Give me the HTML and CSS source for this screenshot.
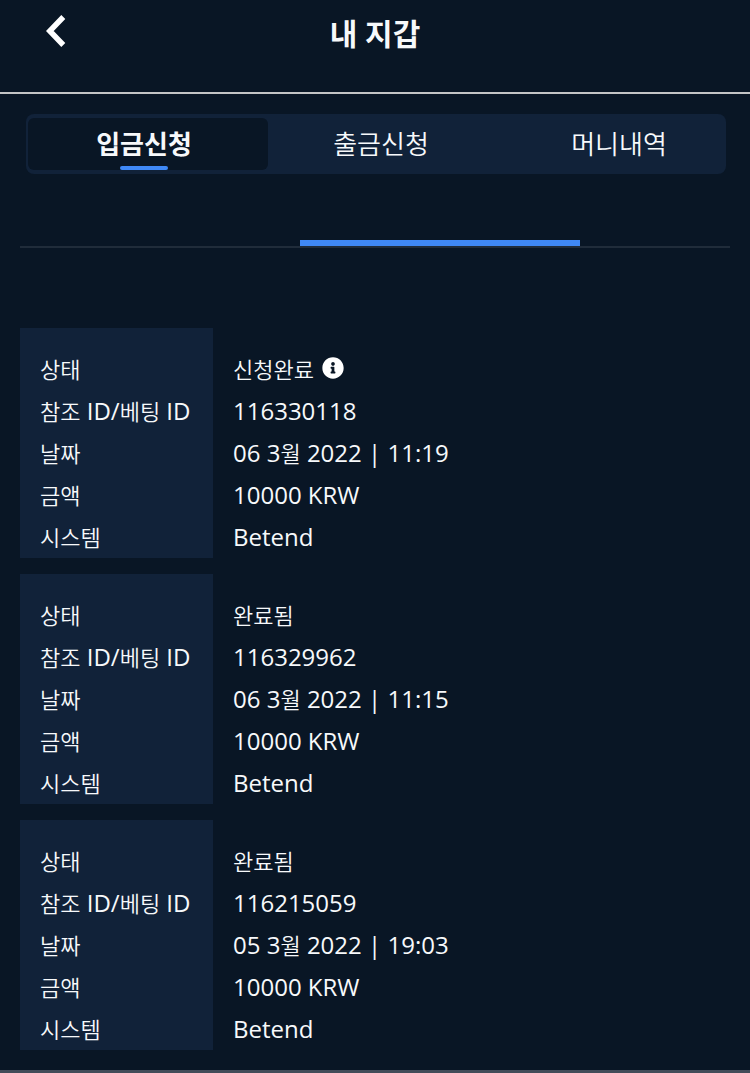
FILE: index.html
```html
<!DOCTYPE html>
<html lang="ko">
<head>
  <meta charset="UTF-8">
  <meta name="viewport" content="width=device-width, initial-scale=1.0">
  <title>내 지갑</title>
  <link rel="stylesheet" href="styles.css">
</head>
<body>
  <header class="header">
    <button class="back-btn" type="button" aria-label="뒤로">
      <svg width="20" height="34" viewBox="0 0 20 34" aria-hidden="true">
        <path d="M17.300 3L3.800 17L17.300 31" fill="none" stroke="#fff" stroke-width="5.500"/>
      </svg>
    </button>
    <h1 class="title">내 지갑</h1>
  </header>

  <main class="wallet">
    <nav class="tabs">
      <button class="tab active" type="button">입금신청</button>
      <button class="tab" type="button">출금신청</button>
      <button class="tab tab-last" type="button">머니내역</button>
    </nav>

    <div class="subtabs">
      <div class="subtabs-bar"></div>
    </div>

    <div class="history">
      <table class="record">
        <tr>
          <th scope="row"><span class="ko">상태</span></th>
          <td>
            <span class="ko">신청완료</span>
            <svg class="info-icon" viewBox="0 0 512 512" aria-hidden="true">
              <path fill="#fff" d="M256 8C119 8 8 119.100 8 256c0 137 111 248 248 248s248-111 248-248C504 119.100 393 8 256 8zm0 110c23.200 0 42 18.800 42 42s-18.800 42-42 42-42-18.800-42-42 18.800-42 42-42zm56 254c0 6.600-5.400 12-12 12h-88c-6.600 0-12-5.400-12-12v-24c0-6.600 5.400-12 12-12h12v-64h-12c-6.600 0-12-5.400-12-12v-24c0-6.600 5.400-12 12-12h64c6.600 0 12 5.400 12 12v100h12c6.600 0 12 5.400 12 12v24z"/>
            </svg>
          </td>
        </tr>
        <tr>
          <th scope="row"><span class="ko">참조</span> ID/<span class="ko">베팅</span> ID</th>
          <td>116330118</td>
        </tr>
        <tr>
          <th scope="row"><span class="ko">날짜</span></th>
          <td>06 3<span class="ko">월</span> 2022 | 11:19</td>
        </tr>
        <tr>
          <th scope="row"><span class="ko">금액</span></th>
          <td>10000 KRW</td>
        </tr>
        <tr>
          <th scope="row"><span class="ko">시스템</span></th>
          <td>Betend</td>
        </tr>
      </table>

      <table class="record">
        <tr>
          <th scope="row"><span class="ko">상태</span></th>
          <td><span class="ko">완료됨</span></td>
        </tr>
        <tr>
          <th scope="row"><span class="ko">참조</span> ID/<span class="ko">베팅</span> ID</th>
          <td>116329962</td>
        </tr>
        <tr>
          <th scope="row"><span class="ko">날짜</span></th>
          <td>06 3<span class="ko">월</span> 2022 | 11:15</td>
        </tr>
        <tr>
          <th scope="row"><span class="ko">금액</span></th>
          <td>10000 KRW</td>
        </tr>
        <tr>
          <th scope="row"><span class="ko">시스템</span></th>
          <td>Betend</td>
        </tr>
      </table>

      <table class="record">
        <tr>
          <th scope="row"><span class="ko">상태</span></th>
          <td><span class="ko">완료됨</span></td>
        </tr>
        <tr>
          <th scope="row"><span class="ko">참조</span> ID/<span class="ko">베팅</span> ID</th>
          <td>116215059</td>
        </tr>
        <tr>
          <th scope="row"><span class="ko">날짜</span></th>
          <td>05 3<span class="ko">월</span> 2022 | 19:03</td>
        </tr>
        <tr>
          <th scope="row"><span class="ko">금액</span></th>
          <td>10000 KRW</td>
        </tr>
        <tr>
          <th scope="row"><span class="ko">시스템</span></th>
          <td>Betend</td>
        </tr>
      </table>
    </div>
  </main>

  <footer class="bottom-edge"></footer>
</body>
</html>
```
FILE: styles.css
```css
:root {
  --bg: #091625;
  --panel: #112239;
  --accent: #3f88f5;
  --text: #f7f9fb;
  --font-family: 'Open Sans', 'Noto Sans CJK KR', sans-serif;
}
* { box-sizing: border-box; margin: 0; padding: 0; }
body {
  background: var(--bg);
  color: var(--text);
  font-family: var(--font-family);
  font-size: 24px;
}
button {
  border: none;
  background: none;
  color: inherit;
  font-family: inherit;
  cursor: pointer;
}

/* Header */
.header {
  display: grid;
  grid-template-columns: 66px 1fr 66px;
  align-items: start;
  height: 94px;
  padding-top: 14px;
  border-bottom: 2px solid #c3c5c6;
}
.back-btn {
  display: flex;
  justify-content: flex-end;
}
.title {
  font-size: 30px;
  font-weight: 700;
  line-height: 40px;
  text-align: center;
}

/* Main tabs */
.wallet { padding: 20px; }
.tabs {
  display: grid;
  grid-template-columns: 240fr 226fr 230fr;
  height: 60px;
  margin: 0 4px 0 6px;
  padding: 4px 2px;
  background: var(--panel);
  border-radius: 8px;
}
.tab {
  display: flex;
  flex-direction: column;
  align-items: center;
  border-radius: 6px;
  font-size: 26px;
  font-weight: 350;
  line-height: 52px;
}
.tab.active {
  padding-right: 8px;
  background: var(--bg);
  font-weight: 700;
}
.tab.active::after {
  content: '';
  width: 48px;
  height: 4px;
  margin-top: -4px;
  border-radius: 2px;
  background: var(--accent);
}
.tab-last { padding-left: 20px; }

/* Scrolled sub tab strip */
.subtabs {
  margin-top: 66px;
  border-bottom: 2px solid #202c3a;
}
.subtabs-bar {
  width: 280px;
  height: 6px;
  margin: 0 auto 0 280px;
  background: var(--accent);
}

/* Transactions */
.history {
  display: flex;
  flex-direction: column;
  gap: 16px;
  margin-top: 80px;
}
.record {
  width: 100%;
  border-collapse: collapse;
}
.record th,
.record td {
  height: 42px;
  padding: 0 20px;
  font-weight: 400;
  line-height: 42px;
  text-align: left;
  white-space: nowrap;
}
.record th {
  width: 193px;
  background: var(--panel);
}
.record tr:first-child th,
.record tr:first-child td {
  padding-top: 20px;
}
.ko {
  font-size: 22px;
  font-weight: 350;
  line-height: 1;
}
.info-icon {
  width: 22px;
  height: 22px;
  margin-left: 2px;
  vertical-align: -1px;
}

.bottom-edge {
  height: 3px;
  background: #434c59;
}
```
